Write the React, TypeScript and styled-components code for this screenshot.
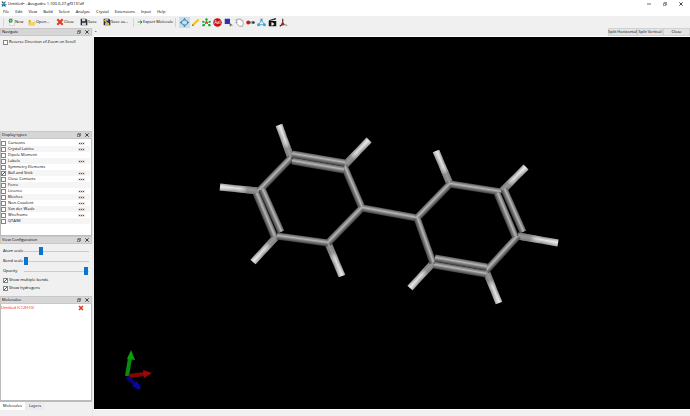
import React, { useState } from 'react';
import styled, { createGlobalStyle, css } from 'styled-components';

const Global = createGlobalStyle`
  * { box-sizing: border-box; }
  html, body, #root { height: 100%; }
  body { margin: 0; overflow: hidden; background: #f0f0f0; color: #000; font-family: "Open Sans", "Noto Sans", sans-serif; font-size: 4px; line-height: 6px; }
  button, input { font: inherit; color: inherit; margin: 0; }
  svg { display: block; flex: none; }
`;

const Window = styled.div`display: flex; flex-direction: column; height: 100vh;`;
const TitleBar = styled.header`display: flex; align-items: center; height: 8px; padding: 0 1px; background: #fff;`;
const Title = styled.h1`flex: 1; margin: 0 0 0 1px; font-size: 4px; font-weight: 400;`;
const Bare = styled.button`display: flex; align-items: center; justify-content: center; padding: 0; border: 0; background: none; white-space: nowrap;`;
const WindowButton = styled(Bare)`width: 16px; height: 8px;`;
const MenuBar = styled.nav`display: flex; align-items: center; gap: 6px; height: 8px; padding-left: 3px; background: #fff;`;
const ToolBar = styled.div`display: flex; align-items: center; height: 12px; padding-left: 3px; background: #f0f0f0;`;
const FileButton = styled(Bare)<{ $w: number }>`justify-content: flex-start; width: ${p => p.$w}px; height: 10px;`;
const Separator = styled.i`width: 1px; height: 9px; margin-right: 3px; background: #d4d4d4;`;
const ToolButton = styled(Bare)<{ $on: boolean }>`width: 11px; height: 11px; ${p => p.$on && css`background: #bfe0f7;`}`;

const Body = styled.div`display: flex; flex: 1; min-height: 0;`;
const Sidebar = styled.aside`display: flex; flex-direction: column; width: 93px; flex: none; border-right: 1px solid #e8e8e8;`;
const Dock = styled.section<{ $h?: number }>`display: flex; flex-direction: column; ${p => p.$h ? `height: ${p.$h}px; flex: none;` : 'flex: 1; min-height: 0;'}`;
const DockTitle = styled.header`display: flex; align-items: center; height: 8px; flex: none; padding: 0 0 0 1px; background: #d6d6d6; border: 1px solid #c8c8c8;`;
const DockName = styled.h2`flex: 1; margin: 0; font-size: 4px; font-weight: 400;`;
const DockButton = styled(Bare)`width: 8px; height: 6px;`;
const Check = styled.input`
  appearance: none; width: 5px; height: 5px; flex: none; border: 1px solid #858585; background: #fff;
  &:checked { background: linear-gradient(135deg, #fff 45%, #555 50%, #fff 65%); }
`;
const CheckLabel = styled.label`display: flex; align-items: center; gap: 1px; height: 8px; white-space: nowrap;`;
const Padded = styled.div`padding: 2px 3px;`;
const TypeList = styled.ul`flex: 1; margin: 0; padding: 1px 1px 0 0; list-style: none; background: #fff; border: 1px solid #bbb; border-top: 0;`;
const TypeRow = styled.li`display: flex; align-items: center; height: 6px; padding-right: 6px; &:nth-child(even) { background: #f5f5f5; }`;
const TypeLabel = styled.label`display: flex; align-items: center; gap: 2px; flex: 1;`;
const Dots = styled(Bare)`gap: 1px; height: 5px;`;
const Dot = styled.i`width: 1px; height: 1px; background: #704838; outline: 1px solid #b0a09840;`;
const Settings = styled.div`display: flex; flex-direction: column; padding: 2px 3px;`;
const SliderLabel = styled.label`display: grid; grid-template-columns: 21px 1fr; align-items: center; height: 10px; white-space: nowrap;`;
const Range = styled.input`
  appearance: none; width: 100%; height: 8px; background: none;
  &::-webkit-slider-runnable-track { height: 1px; background: #ccc; }
  &::-webkit-slider-thumb { appearance: none; width: 4px; height: 8px; margin-top: -4px; background: #0b73d0; }
`;
const Molecules = styled.div`flex: 1; background: #fff; border: 1px solid #bbb; border-top: 0; border-bottom-width: 2px; padding-right: 7px;`;
const MoleculeRow = styled.div`display: flex; justify-content: space-between; align-items: center; height: 8px; color: #f00;`;
const Tabs = styled.div`display: flex; height: 14px; flex: none; align-items: flex-start;`;
const Tab = styled(Bare)<{ $on: boolean }>`height: 8px; width: ${p => p.$on ? 25 : 20}px; background: ${p => p.$on ? '#fff' : '#ececec'};`;

const View = styled.main`display: flex; flex-direction: column; flex: 1; min-width: 0; margin-left: 1px; padding-bottom: 6px;`;
const ViewBar = styled.div`display: flex; align-items: center; height: 9px; flex: none; padding-left: 1px; border-bottom: 1px solid #fff;`;
const ViewName = styled.span`flex: 1;`;
const SplitButton = styled(Bare)<{ $w: number }>`width: ${p => p.$w}px; height: 8px; border: 1px solid #d2d2d2; background: #e4e4e4;`;
const Canvas = styled.div`flex: 1; min-height: 0; background: #000; border-bottom: 1px solid #fff;`;
const Scene = styled.svg`width: 100%; height: 100%;`;

type P = [number, number];

const Glyph = ({ name, size = 9 }: { name: string; size?: number }) => {
  const art: Record<string, React.ReactNode> = {
    logo: <><path d="M1 1h3l6 10H7zM10 1H8L1 11h3z" fill="#174d68" /><path d="M1 7h10" stroke="#2796b8" strokeWidth="2" /></>,
    new: <><path d="M4 1h5l2 2v8H4z" fill="#fff" stroke="#aaa" strokeWidth=".7" /><circle cx="5.5" cy="4" r="3" fill="#168c35" /><path d="M5.5 2v4M3.5 4h4" stroke="#fff" strokeWidth=".6" /></>,
    open: <><path d="M1 3h4l1 1h4v7H1z" fill="#d6a925" /><path d="M4 1h6v6H4z" fill="#e9eef1" /><path d="M1 11l2-5h9l-2 5z" fill="#f4d568" /></>,
    close: <path d="M2 2l8 8M10 2l-8 8" stroke="#e03b25" strokeWidth="3.2" />,
    save: <><path d="M1 1h8l2 2v8H1z" fill="#252b35" /><path d="M3 1h5v4H3zM3 7h6v4H3z" fill="#ccd3d8" /></>,
    saveas: <><path d="M1 1h8l2 2v8H1z" fill="#252b45" /><path d="M3 1h5v3H3zM3 7h6v4H3z" fill="#a9b8cc" /><path d="M2 3l7 7" stroke="#e7b72c" strokeWidth="2" /></>,
    export: <><path d="M1 1h6v10H1z" fill="#fff" stroke="#bbb" strokeWidth=".6" /><path d="M2 6h7M7 3l3 3-3 3" fill="none" stroke="#14933a" strokeWidth="2" /></>,
    navigate: <><ellipse cx="6" cy="6" rx="4" ry="3.3" fill="none" stroke="#47708d" /><path d="M6 0l2 2H4zM6 12l2-2H4zM0 6l2-2v4zM12 6l-2-2v4z" fill="#38617f" /></>,
    draw: <><path d="M2 10L10 2" stroke="#f5bf18" strokeWidth="2.6" /><path d="M1 11l1-3 2 2z" fill="#9b793d" /></>,
    template: <><path d="M6 6V2M6 6L2 10M6 6l4 4M6 6l5-1M6 6L1 5" stroke="#21a833" strokeWidth="1.2" /><g fill="#19a735"><circle cx="6" cy="2" r="1.6" /><circle cx="2" cy="9.5" r="1.6" /><circle cx="10" cy="9.5" r="1.6" /><circle cx="1.5" cy="5" r="1.3" /><circle cx="10.5" cy="5" r="1.3" /></g><circle cx="6" cy="6" r="1.5" fill="#d33" /></>,
    label: <><circle cx="6" cy="6" r="5.7" fill="#c3141b" /><text x="6" y="8" fontSize="6" textAnchor="middle" fill="#fff">AaI</text></>,
    select: <><path d="M1 1h7v7H1z" fill="#3030b5" /><path d="M7 6l5 4-3 0-1 2z" fill="#666" /></>,
    hand: <path d="M1 2l2 1 1-2 1.5 1L7 1l1 2 2 0 1 4-1 4H6L3 8 1 6h2z" fill="#fff" stroke="#777" strokeWidth=".8" />,
    bond: <><path d="M4 6h6" stroke="#65a6cc" strokeWidth="3" /><circle cx="3" cy="6" r="2.6" fill="#c71c1c" /><circle cx="10" cy="6" r="1.7" fill="#333" /></>,
    measure: <><path d="M2 9L6 3l4 6z" fill="none" stroke="#55acd0" strokeWidth="1.3" /><g fill="#45a5cf"><circle cx="6" cy="2.5" r="1.7" /><circle cx="2" cy="9" r="2" /><circle cx="10" cy="9" r="2" /></g></>,
    animate: <><path d="M1 4h10v7H1zM1 3l9-3 1 2-9 2z" fill="#151515" /><path d="M3 2l1 1M6 1l1 1M9 1l1 1M5 6l3 2-3 2z" stroke="#fff" strokeWidth=".8" fill="#fff" /></>,
    align: <><path d="M5 1v8M5 8L1 11" stroke="#222" strokeWidth="1.4" /><path d="M5 8l6 2" stroke="#777" strokeWidth="1.2" /><circle cx="5" cy="8" r="2" fill="#c51717" /></>,
    float: <path d="M4 4V1h7v7H8M1 4h7v7H1z" fill="none" stroke="#222" strokeWidth="1.5" />,
    x: <path d="M1 1l10 10M11 1L1 11" stroke="#222" strokeWidth="2.5" />,
    min: <path d="M0 6h12" stroke="#222" strokeWidth="2" />,
  };
  return <svg width={size} height={size} viewBox="0 0 12 12" aria-hidden="true">{art[name]}</svg>;
};

const carbons: [P, P][] = [
  [[291, 158], [259, 191]], [[344, 166], [362, 208]], [[362, 208], [328, 243]], [[328, 243], [277, 236]],
  [[362, 208], [417, 218]], [[417, 218], [450, 184]], [[450, 184], [501, 192]], [[518, 236], [486, 271]], [[433, 263], [417, 218]],
  [[292, 154], [345, 163]], [[292, 161], [344, 170]], [[262, 189], [281, 232]], [[256, 193], [274, 236]],
  [[504, 189], [523, 232]], [[497, 193], [515, 236]], [[435, 258], [487, 267]], [[434, 265], [486, 274]],
];
const hydrogens: [P, P][] = [
  [[291, 158], [279, 125]], [[344, 166], [369, 140]], [[328, 243], [342, 276]], [[277, 236], [253, 262]], [[259, 191], [220, 187]],
  [[450, 184], [436, 151]], [[501, 192], [526, 167]], [[518, 236], [558, 243]], [[486, 271], [499, 303]], [[433, 263], [410, 288]],
];

/* Shaded cylinder: a gradient running across the bond's width. */
const Bond = ({ a, b, id, light }: { a: P; b: P; id: string; light?: boolean }) => {
  const dx = b[0] - a[0], dy = b[1] - a[1], len = Math.hypot(dx, dy);
  let nx = -dy / len * 3.6, ny = dx / len * 3.6;
  if (ny < 0) { nx = -nx; ny = -ny; }
  return <>
    <defs>
      <linearGradient id={id} gradientUnits="userSpaceOnUse" x1={a[0] - nx} y1={a[1] - ny} x2={a[0] + nx} y2={a[1] + ny}>
        <stop offset="0" stopColor={light ? '#808080' : '#555'} /><stop offset=".42" stopColor={light ? '#e2e2e2' : '#b8b8b8'} />
        <stop offset=".62" stopColor={light ? '#c4c4c4' : '#808080'} /><stop offset="1" stopColor={light ? '#808080' : '#3c3c3c'} />
      </linearGradient>
      {light && <linearGradient id={id + 'w'} gradientUnits="userSpaceOnUse" x1={a[0]} y1={a[1]} x2={b[0]} y2={b[1]}>
        <stop offset=".3" stopColor="#777" stopOpacity=".7" /><stop offset=".6" stopColor="#fff" stopOpacity="0" /><stop offset="1" stopColor="#fff" stopOpacity=".35" />
      </linearGradient>}
    </defs>
    <line x1={a[0]} y1={a[1]} x2={b[0]} y2={b[1]} stroke={`url(#${id})`} strokeWidth="7" />
    {light && <line x1={a[0]} y1={a[1]} x2={b[0]} y2={b[1]} stroke={`url(#${id}w)`} strokeWidth="7" />}
  </>;
};

const files: [string, string, number][] = [['New', 'new', 21], ['Open...', 'open', 28], ['Close', 'close', 24], ['Save', 'save', 23], ['Save as...', 'saveas', 30]];
const tools = ['navigate', 'draw', 'template', 'label', 'select', 'hand', 'bond', 'measure', 'animate', 'align'];
const types: [string, boolean][] = [['Cartoons', true], ['Crystal Lattice', true], ['Dipole Moment', false], ['Labels', true], ['Symmetry Elements', false], ['Ball and Stick', true], ['Close Contacts', true], ['Force', false], ['Licorice', true], ['Meshes', true], ['Non-Covalent', true], ['Van der Waals', true], ['Wireframe', true], ['QTAIM', false]];

const DockHead = ({ name }: { name: string }) => (
  <DockTitle><DockName>{name}</DockName>
    <DockButton aria-label={`Float ${name}`}><Glyph name="float" size={4} /></DockButton>
    <DockButton aria-label={`Close ${name}`}><Glyph name="x" size={4} /></DockButton>
  </DockTitle>
);

export default function App() {
  const [tool, setTool] = useState('navigate');
  const [tab, setTab] = useState('Molecules');
  return <>
    <Global />
    <Window>
      <TitleBar>
        <Glyph name="logo" size={6} /><Title>Untitled• - Avogadro 1.100.0-27-gf3131df</Title>
        {['min', 'float', 'x'].map(n => <WindowButton key={n} aria-label={n}><Glyph name={n} size={4} /></WindowButton>)}
      </TitleBar>
      <MenuBar>{['File', 'Edit', 'View', 'Build', 'Select', 'Analyze', 'Crystal', 'Extensions', 'Input', 'Help'].map(m => <Bare key={m}>{m}</Bare>)}</MenuBar>
      <ToolBar>
        <Separator />
        {files.map(([label, icon, w]) => <FileButton key={label} $w={w}><Glyph name={icon} size={8} />{label}</FileButton>)}
        <Separator /><FileButton $w={38}><Glyph name="export" size={6} />Export Molecule</FileButton><Separator />
        {tools.map(t => <ToolButton key={t} $on={tool === t} aria-label={t} onClick={() => setTool(t)}><Glyph name={t} /></ToolButton>)}
      </ToolBar>
      <Body>
        <Sidebar>
          <Dock $h={103}><DockHead name="Navigate" /><Padded><CheckLabel><Check type="checkbox" />Reverse Direction of Zoom on Scroll</CheckLabel></Padded></Dock>
          <Dock $h={105}><DockHead name="Display types" />
            <TypeList>{types.map(([t, more]) => <TypeRow key={t}>
              <TypeLabel><Check type="checkbox" defaultChecked={t === 'Ball and Stick'} />{t}</TypeLabel>
              {more && <Dots aria-label={`${t} options`}><Dot /><Dot /><Dot /></Dots>}
            </TypeRow>)}</TypeList>
          </Dock>
          <Dock $h={60}><DockHead name="View Configuration" />
            <Settings>
              <SliderLabel>Atom scale<Range type="range" defaultValue={25} /></SliderLabel>
              <SliderLabel>Bond scale<Range type="range" defaultValue={0} /></SliderLabel>
              <SliderLabel>Opacity<Range type="range" defaultValue={98} /></SliderLabel>
              <CheckLabel><Check type="checkbox" defaultChecked />Show multiple bonds</CheckLabel>
              <CheckLabel><Check type="checkbox" defaultChecked />Show hydrogens</CheckLabel>
            </Settings>
          </Dock>
          <Dock><DockHead name="Molecules" />
            <Molecules><MoleculeRow>Untitled (C12H10)<Bare aria-label="Remove molecule"><Glyph name="close" size={6} /></Bare></MoleculeRow></Molecules>
          </Dock>
          <Tabs>{['Molecules', 'Layers'].map(t => <Tab key={t} $on={tab === t} onClick={() => setTab(t)}>{t}</Tab>)}</Tabs>
        </Sidebar>
        <View>
          <ViewBar><ViewName>•</ViewName><SplitButton $w={29}>Split Horizontal</SplitButton><SplitButton $w={26}>Split Vertical</SplitButton><SplitButton $w={27}>Close</SplitButton></ViewBar>
          <Canvas>
            <Scene viewBox="94 37 596 372" role="img" aria-label="Biphenyl molecule">
              {hydrogens.map(([a, b], i) => <Bond key={i} a={a} b={b} id={`h${i}`} light />)}
              {carbons.map(([a, b], i) => <Bond key={i} a={a} b={b} id={`c${i}`} />)}
              <path d="M127 376L130 358" stroke="#078c0b" strokeWidth="4" /><path d="M127 359l4-9 4 10z" fill="#08a00d" />
              <path d="M129 376l15-2" stroke="#850505" strokeWidth="4" /><path d="M143 370l9 3-8 5z" fill="#990808" />
              <path d="M127 377l8 7" stroke="#050578" strokeWidth="4" /><path d="M132 386l5-5 4 6-2 3z" fill="#0707a0" />
            </Scene>
          </Canvas>
        </View>
      </Body>
    </Window>
  </>;
}
